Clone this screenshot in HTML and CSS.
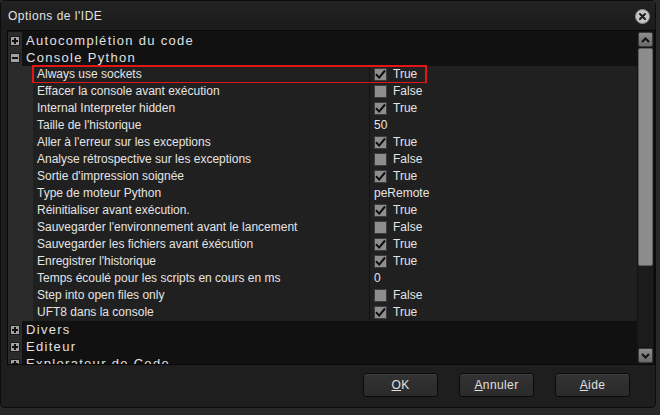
FILE: index.html
```html
<!DOCTYPE html>
<html lang="fr">
<head>
    <meta charset="UTF-8">
    <title>Options de l'IDE</title>
    <link rel="stylesheet" href="styles.css">
</head>
<body>
    <div class="dialog">
        <div class="titlebar">
            <span class="title">Options de l'IDE</span>
            <span class="close">
                <svg width="15" height="15" viewBox="0 0 15 15">
                    <circle cx="7.5" cy="7.5" r="7" fill="#c4c4c4" stroke="#8a8a8a" stroke-width="1"/>
                    <path d="M5 5 L10 10 M10 5 L5 10" stroke="#1a1a1a" stroke-width="2" stroke-linecap="round"/>
                </svg>
            </span>
        </div>

        <div class="panel">
            <div class="tree">
                <div class="node"><span class="gutter"><span class="exp plus"></span></span><span class="node-label">Autocomplétion du code</span></div>
                <div class="node"><span class="gutter"><span class="exp"></span></span><span class="node-label">Console Python</span></div>

                <div class="prop">
                    <span class="indent"></span>
                    <span class="name">Always use sockets</span>
                    <span class="value"><span class="check on"></span>True</span>
                    <span class="mark"></span>
                </div>
                <div class="prop"><span class="indent"></span><span class="name">Effacer la console avant exécution</span><span class="value"><span class="check"></span>False</span></div>
                <div class="prop"><span class="indent"></span><span class="name">Internal Interpreter hidden</span><span class="value"><span class="check on"></span>True</span></div>
                <div class="prop"><span class="indent"></span><span class="name">Taille de l'historique</span><span class="value">50</span></div>
                <div class="prop"><span class="indent"></span><span class="name">Aller à l'erreur sur les exceptions</span><span class="value"><span class="check on"></span>True</span></div>
                <div class="prop"><span class="indent"></span><span class="name">Analyse rétrospective sur les exceptions</span><span class="value"><span class="check"></span>False</span></div>
                <div class="prop"><span class="indent"></span><span class="name">Sortie d'impression soignée</span><span class="value"><span class="check on"></span>True</span></div>
                <div class="prop"><span class="indent"></span><span class="name">Type de moteur Python</span><span class="value">peRemote</span></div>
                <div class="prop"><span class="indent"></span><span class="name">Réinitialiser avant exécution.</span><span class="value"><span class="check on"></span>True</span></div>
                <div class="prop"><span class="indent"></span><span class="name">Sauvegarder l'environnement avant le lancement</span><span class="value"><span class="check"></span>False</span></div>
                <div class="prop"><span class="indent"></span><span class="name">Sauvegarder les fichiers avant éxécution</span><span class="value"><span class="check on"></span>True</span></div>
                <div class="prop"><span class="indent"></span><span class="name">Enregistrer l'historique</span><span class="value"><span class="check on"></span>True</span></div>
                <div class="prop"><span class="indent"></span><span class="name">Temps écoulé pour les scripts en cours en ms</span><span class="value">0</span></div>
                <div class="prop"><span class="indent"></span><span class="name">Step into open files only</span><span class="value"><span class="check"></span>False</span></div>
                <div class="prop"><span class="indent"></span><span class="name">UFT8 dans la console</span><span class="value"><span class="check on"></span>True</span></div>

                <div class="node"><span class="gutter"><span class="exp plus"></span></span><span class="node-label">Divers</span></div>
                <div class="node"><span class="gutter"><span class="exp plus"></span></span><span class="node-label">Editeur</span></div>
                <div class="node"><span class="gutter"><span class="exp plus"></span></span><span class="node-label">Explorateur de Code</span></div>
            </div>

            <div class="scrollbar">
                <span class="sb-btn">
                    <svg width="9" height="6" viewBox="0 0 9 6"><path d="M1 5 L4.5 1.5 L8 5" fill="none" stroke="#111" stroke-width="2"/></svg>
                </span>
                <div class="track"><div class="thumb"></div></div>
                <span class="sb-btn">
                    <svg width="9" height="6" viewBox="0 0 9 6"><path d="M1 1 L4.5 4.5 L8 1" fill="none" stroke="#111" stroke-width="2"/></svg>
                </span>
            </div>
        </div>

        <div class="footer">
            <button class="btn"><u>O</u>K</button>
            <button class="btn"><u>A</u>nnuler</button>
            <button class="btn"><u>A</u>ide</button>
        </div>
    </div>
</body>
</html>
```

FILE: styles.css
```css
* {
    margin: 0;
    box-sizing: border-box;
}
body {
    background-color: #282828;
    font-family: "Liberation Sans", Arial, sans-serif;
    color: #e4e4e4;
}
.dialog {
    width: 656px;
    height: 408px;
    background-color: #1e1e1e;
    border: 1px solid #0c0c0c;
    border-radius: 5px;
    display: flex;
    flex-direction: column;
}
.titlebar {
    height: 29px;
    display: flex;
    align-items: center;
    justify-content: space-between;
    padding: 0 5px 0 7px;
    background: linear-gradient(#222, #1b1b1b);
}
.title {
    font-size: 12px;
    letter-spacing: 0.5px;
    color: #e2e2e2;
}
.close {
    display: flex;
    margin-top: 1px;
}

/* tree + scrollbar */
.panel {
    margin-left: 6px;
    width: 648px;
    height: 335px;
    border: 1px solid #080808;
    background-color: #111;
    display: flex;
}
.tree {
    width: 629px;
    padding-top: 1px;
    overflow: hidden;
}
.node {
    height: 17px;
    display: flex;
}
.gutter {
    width: 14px;
    background-color: #2b2b2b;
    display: flex;
    align-items: center;
    padding-left: 2px;
}
.exp {
    width: 10px;
    height: 10px;
    background-color: #a3a3a3;
    border: 1px solid #1a1a1a;
    position: relative;
}
.exp::before {
    content: "";
    position: absolute;
    left: 1px;
    top: 3px;
    width: 6px;
    height: 0;
    border-top: 2px solid #111;
}
.plus::after {
    content: "";
    position: absolute;
    left: 3px;
    top: 1px;
    width: 0;
    height: 6px;
    border-left: 2px solid #111;
}
.node-label {
    flex: 1;
    font-size: 13px;
    letter-spacing: 1.3px;
    line-height: 17px;
    padding-left: 4px;
    color: #e0e0e0;
}

.prop {
    position: relative;
    height: 17px;
    display: grid;
    grid-template-columns: 25px 337px 1fr;
    font-size: 12px;
    line-height: 17px;
}
.indent {
    background-color: #2b2b2b;
}
.name {
    background-color: #202020;
    border-right: 1px solid #131313;
    padding-left: 4px;
    white-space: nowrap;
    overflow: hidden;
}
.value {
    background-color: #202020;
    padding-left: 4px;
    display: flex;
    align-items: center;
    gap: 6px;
}
.check {
    width: 13px;
    height: 13px;
    background-color: #8e8e8e;
    border: 1px solid #3c3c3c;
}
.check.on {
    background: #8e8e8e url("data:image/svg+xml,%3Csvg xmlns='http://www.w3.org/2000/svg' width='11' height='11'%3E%3Cpath d='M1 5.2 L4.2 8.6 L10 1.5' fill='none' stroke='%230d0d0d' stroke-width='2'/%3E%3C/svg%3E") no-repeat center;
}
.mark {
    position: absolute;
    left: 24px;
    top: -1px;
    width: 395px;
    height: 19px;
    border: 2px solid #e21616;
}

.scrollbar {
    width: 17px;
    padding: 1px;
    display: flex;
    flex-direction: column;
    background-color: #141414;
}
.sb-btn {
    height: 15px;
    display: flex;
    align-items: center;
    justify-content: center;
    background: linear-gradient(#8e8e8e, #6a6a6a);
    border: 1px solid #3a3a3a;
    border-radius: 2px;
}
.track {
    flex: 1;
    margin: 1px 0;
    background: repeating-conic-gradient(#1f1f1f 0 25%, #171717 0 50%) 0 0 / 2px 2px;
}
.thumb {
    height: 218px;
    background-color: #8c8c8c;
    border: 1px solid #5e5e5e;
    border-radius: 2px;
}

/* buttons */
.footer {
    flex: 1;
    display: flex;
    justify-content: flex-end;
    align-items: flex-start;
    gap: 21px;
    padding: 8px 25px 0 0;
}
.btn {
    width: 75px;
    height: 24px;
    font-family: "Liberation Sans", Arial, sans-serif;
    font-size: 12px;
    letter-spacing: 0.4px;
    color: #e0e0e0;
    background: linear-gradient(#333, #2a2a2a);
    border: 1px solid #0b0b0b;
    border-radius: 3px;
    box-shadow: inset 0 1px 0 #3d3d3d;
}
```
